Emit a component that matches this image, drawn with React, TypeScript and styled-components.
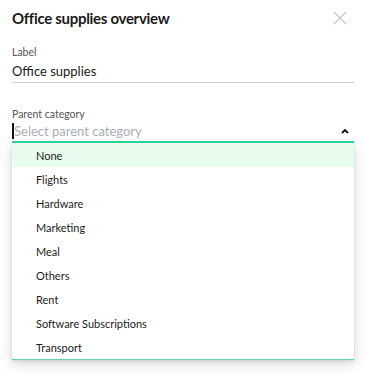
import styled, { createGlobalStyle } from 'styled-components';

const GlobalStyle = createGlobalStyle`
  body {
    margin: 0;
    background: #fff;
    font-family: Lato, "Noto Sans", sans-serif;
    color: #1b1b1b;
  }
`;

const Panel = styled.div`
  width: 366px;
  height: 376px;
  padding: 0 12px;
  box-sizing: border-box;
  overflow: hidden;
`;

const Header = styled.div`
  display: flex;
  align-items: center;
  justify-content: space-between;
  height: 36px;
`;

const Title = styled.h1`
  margin: 0;
  font-size: 15px;
  font-weight: 700;
  letter-spacing: -0.3px;
`;

const CloseButton = styled.button`
  border: 0;
  background: none;
  padding: 0;
  width: 16px;
  height: 16px;
  margin-right: 6px;
  display: flex;
  align-items: center;
  justify-content: center;
  cursor: pointer;
`;

const Field = styled.div<{ $top: number }>`
  margin-top: ${({ $top }) => $top}px;
`;

const FieldLabel = styled.div`
  font-size: 10.5px;
  color: #555;
  line-height: 14px;
`;

const ValueRow = styled.div<{ $active?: boolean }>`
  display: flex;
  align-items: center;
  justify-content: space-between;
  height: ${({ $active }) => ($active ? 20 : 23)}px;
  border-bottom: ${({ $active }) => ($active ? '2px solid #2fdc9c' : '1px solid #cfcfcf')};
  font-size: 13px;
`;

const Placeholder = styled.span`
  color: #a9aeb4;
  border-left: 2px solid #111;
  line-height: 16px;
`;

const Menu = styled.ul`
  list-style: none;
  margin: 0;
  padding: 0;
  background: #fff;
  border-bottom: 1px solid #5fd3a6;
  box-shadow: 0 4px 12px rgba(0, 0, 0, 0.16), 0 1px 3px rgba(0, 0, 0, 0.1);
`;

const MenuItem = styled.li<{ $highlight?: boolean }>`
  height: 24px;
  display: flex;
  align-items: center;
  padding-left: 24px;
  font-size: 11px;
  color: #1b1b1b;
  background: ${({ $highlight }) => ($highlight ? '#e8fcee' : '#fff')};
`;

const options = [
  'None',
  'Flights',
  'Hardware',
  'Marketing',
  'Meal',
  'Others',
  'Rent',
  'Software Subscriptions',
  'Transport',
];

export default function App() {
  return (
    <>
      <GlobalStyle />
      <Panel>
        <Header>
          <Title>Office supplies overview</Title>
          <CloseButton aria-label="Close">
            <svg width="14" height="14" viewBox="0 0 14 14" fill="none" stroke="#c4c8cc" strokeWidth="1.3">
              <path d="M1 1l12 12M13 1L1 13" />
            </svg>
          </CloseButton>
        </Header>
        <Field $top={9}>
          <FieldLabel>Label</FieldLabel>
          <ValueRow>Office supplies</ValueRow>
        </Field>
        <Field $top={24}>
          <FieldLabel>Parent category</FieldLabel>
          <ValueRow $active>
            <Placeholder>Select parent category</Placeholder>
            <svg width="10" height="8" viewBox="0 0 10 8" fill="none" stroke="#111" strokeWidth="1.8" style={{ marginRight: 4 }}>
              <path d="M2 6l3-3 3 3" />
            </svg>
          </ValueRow>
          <Menu>
            {options.map((o, i) => (
              <MenuItem key={o} $highlight={i === 0}>
                {o}
              </MenuItem>
            ))}
          </Menu>
        </Field>
      </Panel>
    </>
  );
}
